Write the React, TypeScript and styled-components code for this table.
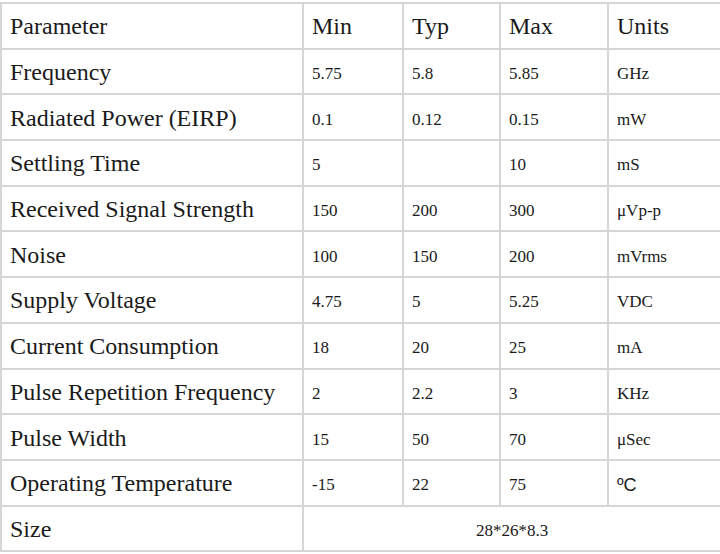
import React from "react";
import styled, { createGlobalStyle } from "styled-components";

const Global = createGlobalStyle`
  html, body { margin: 0; padding: 0; background: #ffffff; }
  body { font-family: "Liberation Serif", "Times New Roman", serif; color: #1a1a1a; }
`;

const Page = styled.div`
  padding-top: 2px;
  width: 720px;
`;

const Table = styled.table`
  width: 720px;
  border-collapse: collapse;
  table-layout: fixed;
  border: 2px solid #d6d6d6;
`;

const Row = styled.tr`
  height: 45.7px;
`;

const Cell = styled.td<{ $label?: boolean; $center?: boolean }>`
  border: 2px solid #d6d6d6;
  padding: ${(p) => (p.$label ? "1px 8px 0 8px" : "5px 8px 0 8px")};
  vertical-align: middle;
  font-size: ${(p) => (p.$label ? "24px" : "17px")};
  line-height: ${(p) => (p.$label ? "28px" : "20px")};
  text-align: ${(p) => (p.$center ? "center" : "left")};
  white-space: nowrap;
  overflow: hidden;
`;

const HeadCell = styled.th`
  border: 2px solid #d6d6d6;
  padding: 1px 8px 0 8px;
  vertical-align: middle;
  font-size: 24px;
  line-height: 28px;
  font-weight: normal;
  text-align: left;
  white-space: nowrap;
`;

const SansUnit = styled.span`
  font-family: "Liberation Sans", Arial, sans-serif;
  font-size: 18px;
`;

type R = { name: string; min: string; typ: string; max: string; unit: React.ReactNode };

const rows: R[] = [
  { name: "Frequency", min: "5.75", typ: "5.8", max: "5.85", unit: "GHz" },
  { name: "Radiated Power (EIRP)", min: "0.1", typ: "0.12", max: "0.15", unit: "mW" },
  { name: "Settling Time", min: "5", typ: "", max: "10", unit: "mS" },
  { name: "Received Signal Strength", min: "150", typ: "200", max: "300", unit: "μVp-p" },
  { name: "Noise", min: "100", typ: "150", max: "200", unit: "mVrms" },
  { name: "Supply Voltage", min: "4.75", typ: "5", max: "5.25", unit: "VDC" },
  { name: "Current Consumption", min: "18", typ: "20", max: "25", unit: "mA" },
  { name: "Pulse Repetition Frequency", min: "2", typ: "2.2", max: "3", unit: "KHz" },
  { name: "Pulse Width", min: "15", typ: "50", max: "70", unit: "μSec" },
  { name: "Operating Temperature", min: "-15", typ: "22", max: "75", unit: <SansUnit>ºC</SansUnit> },
];

export default function App() {
  return (
    <Page>
      <Global />
      <Table>
        <colgroup>
          <col style={{ width: 302 }} />
          <col style={{ width: 100 }} />
          <col style={{ width: 97 }} />
          <col style={{ width: 108 }} />
          <col style={{ width: 113 }} />
        </colgroup>
        <thead>
          <Row>
            <HeadCell>Parameter</HeadCell>
            <HeadCell>Min</HeadCell>
            <HeadCell>Typ</HeadCell>
            <HeadCell>Max</HeadCell>
            <HeadCell>Units</HeadCell>
          </Row>
        </thead>
        <tbody>
          {rows.map((r) => (
            <Row key={r.name}>
              <Cell $label>{r.name}</Cell>
              <Cell>{r.min}</Cell>
              <Cell>{r.typ}</Cell>
              <Cell>{r.max}</Cell>
              <Cell>{r.unit}</Cell>
            </Row>
          ))}
          <Row>
            <Cell $label>Size</Cell>
            <Cell colSpan={4} $center>
              28*26*8.3
            </Cell>
          </Row>
        </tbody>
      </Table>
    </Page>
  );
}
